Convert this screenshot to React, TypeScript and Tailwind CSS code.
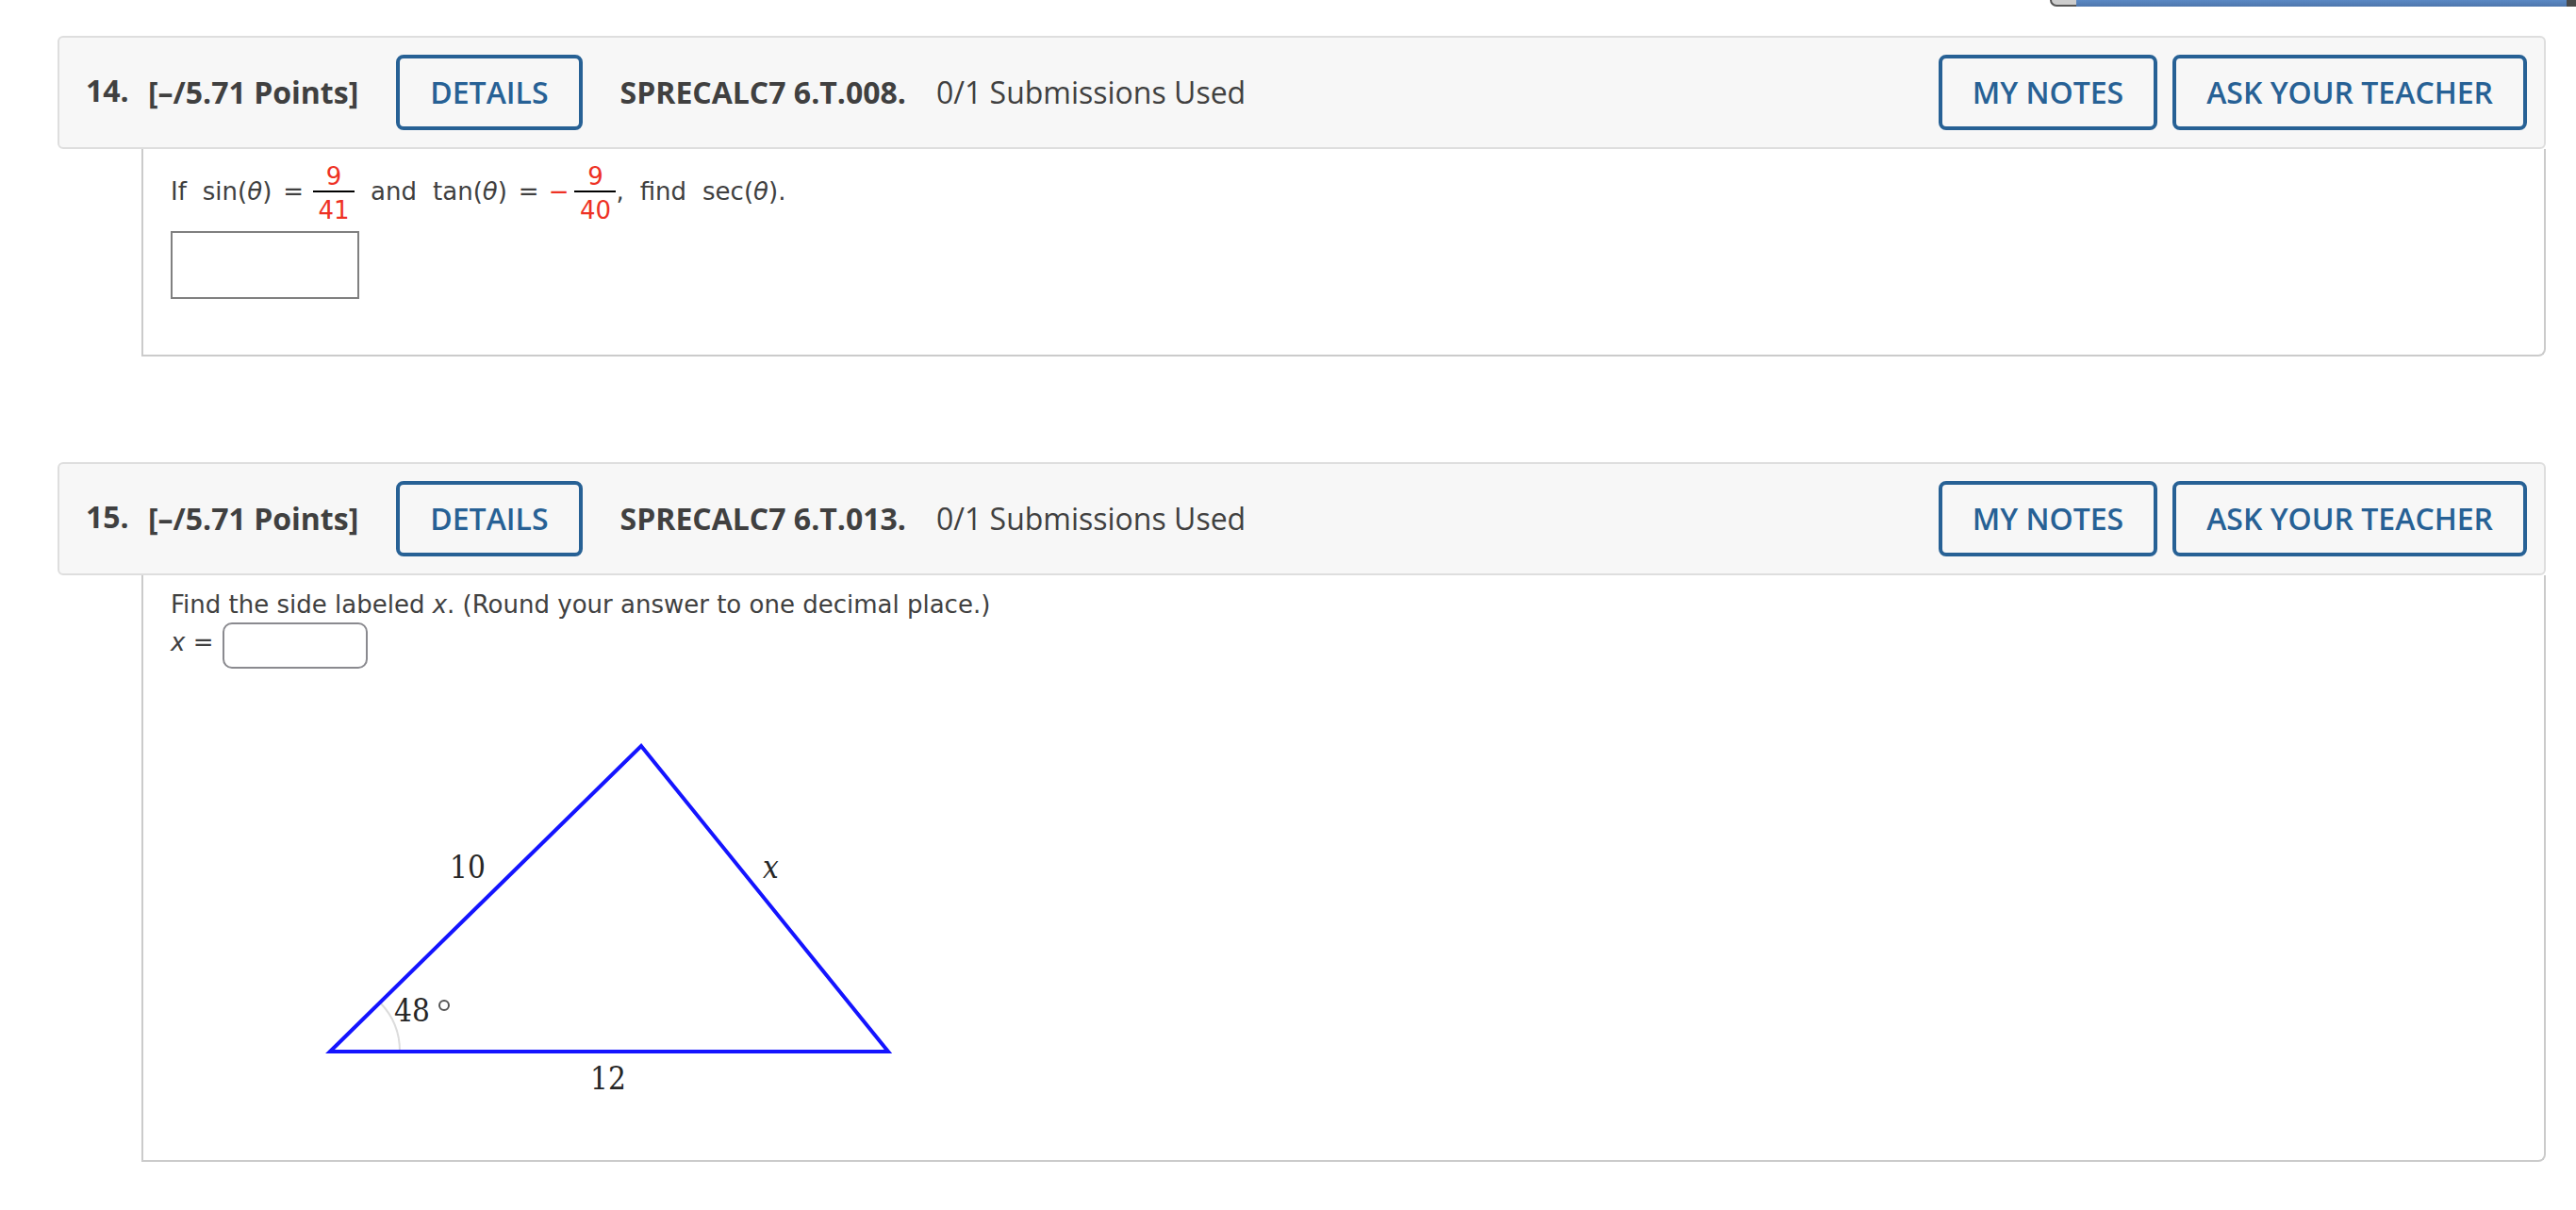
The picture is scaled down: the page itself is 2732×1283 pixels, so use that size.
import { ReactNode } from "react";

type QuestionProps = {
  number: number;
  code: string;
  children: ReactNode;
};

const outlineButton =
  "h-20 shrink-0 rounded-lg border-4 border-[#276195] px-8 font-semibold text-[#276195]";

function Fraction({ top, bottom }: { top: string; bottom: string }) {
  return (
    <span className="inline-flex w-11 flex-col pt-1 text-center leading-[30px] text-[#ee3124]">
      <span>{top}</span>
      <span className="border-t-2 border-black pt-1">{bottom}</span>
    </span>
  );
}

function Question({ number, code, children }: QuestionProps) {
  return (
    <section>
      <header className="flex h-[120px] items-center rounded-md border-2 border-[#dedede] bg-[#f7f7f7] pr-[18px] pl-7 text-[32px] text-[#404040]">
        <h2 className="flex items-center font-bold">
          <span className="w-[66px] pb-1">{number}.</span>
          <span>[–/5.71 Points]</span>
        </h2>
        <button type="button" className={`ml-10 ${outlineButton}`}>
          DETAILS
        </button>
        <span className="ml-10 font-bold">{code}</span>
        <span className="ml-8">0/1 Submissions Used</span>
        <div className="ml-auto flex gap-4">
          <button type="button" className={outlineButton}>
            MY NOTES
          </button>
          <button type="button" className={outlineButton}>
            ASK YOUR TEACHER
          </button>
        </div>
      </header>
      <div className="ml-[89px] rounded-br-lg border-2 border-t-0 border-[#cbcbcb] pl-[29px] font-['DejaVu_Sans',sans-serif] text-[26px] leading-8 text-[#404040]">
        {children}
      </div>
    </section>
  );
}

function Triangle() {
  return (
    <svg
      width="800"
      height="490"
      viewBox="0 0 800 490"
      role="img"
      aria-label="Triangle with sides 10, 12 and x and an angle of 48 degrees"
      className="mt-[31px] block font-['DejaVu_Serif_Condensed','Liberation_Serif',serif] text-[33px]"
    >
      <path d="M222 323A74 74 0 0 1 243 375" fill="none" stroke="#dcdcdc" strokeWidth="2" />
      <path d="M169 375L499 51L761 375Z" fill="none" stroke="#1414ff" strokeWidth="4" />
      <g fill="#262626">
        <text x="296" y="191">10</text>
        <text x="628" y="191" fontStyle="italic">x</text>
        <text x="237" y="343">48</text>
        <text x="445" y="415">12</text>
      </g>
      <circle cx="290" cy="326" r="5" fill="none" stroke="#555" strokeWidth="2" />
    </svg>
  );
}

export default function App() {
  return (
    <div className="bg-white font-['Open_Sans',sans-serif]">
      {/* bottom edge of the toolbar above the assignment */}
      <div className="flex h-[7px] justify-end">
        <div className="w-7 rounded-bl-lg border-b-2 border-l-2 border-[#555] bg-[#cdcdcd]" />
        <div className="w-[520px] bg-linear-to-b from-[#5b89c4] to-[#4f77ad]" />
        <div className="w-[10px] bg-[#4a4a4a]" />
      </div>
      <main className="flex flex-col gap-28 pt-[31px] pr-8 pl-[61px]">
        <Question number={14} code="SPRECALC7 6.T.008.">
          <div className="pt-[10px] pb-[59px]">
            <p className="flex items-center">
              <span>If</span>
              <span className="ml-[17px]">sin(<i>θ</i>)</span>
              <span className="mr-[10px] ml-3">=</span>
              <Fraction top="9" bottom="41" />
              <span className="ml-[17px]">and</span>
              <span className="ml-[17px]">tan(<i>θ</i>)</span>
              <span className="mr-[10px] ml-3">=</span>
              <span className="mr-[6px] text-[#ee3124]">−</span>
              <Fraction top="9" bottom="40" />
              <span>,</span>
              <span className="ml-[17px]">find</span>
              <span className="ml-[17px]">sec(<i>θ</i>).</span>
            </p>
            <input
              aria-label="sec(θ)"
              className="mt-[7px] block h-[72px] w-[200px] border-2 border-[#808080] px-2"
            />
          </div>
        </Question>
        <Question number={15} code="SPRECALC7 6.T.013.">
          <div className="pt-[15px]">
            <p>
              Find the side labeled <i>x</i>. (Round your answer to one decimal place.)
            </p>
            <label className="mt-[3px] flex items-center gap-[10px]">
              <span className="pb-2">
                <i>x</i> =
              </span>
              <input className="h-[49px] w-[154px] rounded-[10px] border-2 border-[#8a8a8f] px-2" />
            </label>
            <Triangle />
          </div>
        </Question>
      </main>
    </div>
  );
}
